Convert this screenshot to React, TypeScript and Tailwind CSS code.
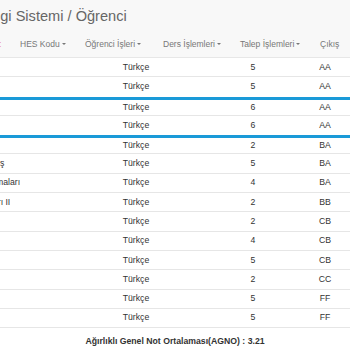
import React from "react";

const rows = [
  { name: "", credit: 5, grade: "AA" },
  { name: "", credit: 5, grade: "AA" },
  { name: "", credit: 6, grade: "AA" },
  { name: "", credit: 6, grade: "AA" },
  { name: "", credit: 2, grade: "BA" },
  { name: "Giriş", credit: 5, grade: "BA" },
  { name: "Uygulamaları", credit: 4, grade: "BA" },
  { name: "Fizik Laboratuvarı II", credit: 2, grade: "BB" },
  { name: "", credit: 2, grade: "CB" },
  { name: "", credit: 4, grade: "CB" },
  { name: "", credit: 5, grade: "CB" },
  { name: "", credit: 2, grade: "CC" },
  { name: "", credit: 5, grade: "FF" },
  { name: "", credit: 5, grade: "FF" },
];

// how far each name is pushed left out of view
const nameShift: Record<string, string> = {
  "Giriş": "-ml-[13.5px]",
  "Uygulamaları": "-ml-[31px]",
  "Fizik Laboratuvarı II": "-ml-[66px]",
};

function Caret() {
  return <span className="ml-[2px] inline-block border-x-[2.5px] border-t-[2.5px] border-x-transparent border-t-[#777] align-middle" />;
}

export default function App() {
  return (
    <div className="w-[350px] h-[350px] overflow-hidden bg-white font-['Liberation_Sans',Arial,sans-serif] text-[#333]">
      <nav className="h-[58px] bg-[#f8f8f8] border-b border-[#e7e7e7] flex flex-col">
        <div className="h-[34px] flex items-center whitespace-nowrap">
          <span className="-ml-[16px] text-[14.6px] text-[#666]">Bilgi Sistemi / Öğrenci</span>
        </div>
        <div className="h-[20px] flex items-center text-[8.5px] text-[#777] whitespace-nowrap">
          <span className="-ml-[1px] w-[21px] text-[#e8808a]">:</span>
          <span className="w-[65px]">HES Kodu<Caret /></span>
          <span className="w-[78px]">Öğrenci İşleri<Caret /></span>
          <span className="w-[77px]">Ders İşlemleri<Caret /></span>
          <span className="w-[80px]">Talep İşlemleri<Caret /></span>
          <span>Çıkış</span>
        </div>
      </nav>

      <div className="flex flex-col text-[8.7px] text-[#333]">
        {rows.map((r, i) => (
          <div
            key={i}
            className={`grid grid-cols-[96px_80px_30px_94px_50px] items-center h-[19.3px] border-b border-[#e6e6e6] ${
              i === 2 || i === 4 ? "border-t-[3px] border-t-[#1a9ad8]" : ""
            } ${i === 1 || i === 3 ? "border-b-0" : ""}`}
          >
            <div className="overflow-hidden whitespace-nowrap">
              {r.name && <span className={`inline-block ${nameShift[r.name]}`}>{r.name}</span>}
            </div>
            <div className="text-center">Türkçe</div>
            <div />
            <div className="text-center">{r.credit}</div>
            <div className="text-center">{r.grade}</div>
          </div>
        ))}
        <div className="h-[27px] flex items-center justify-center font-bold">
          Ağırlıklı Genel Not Ortalaması(AGNO) : 3.21
        </div>
      </div>
    </div>
  );
}
